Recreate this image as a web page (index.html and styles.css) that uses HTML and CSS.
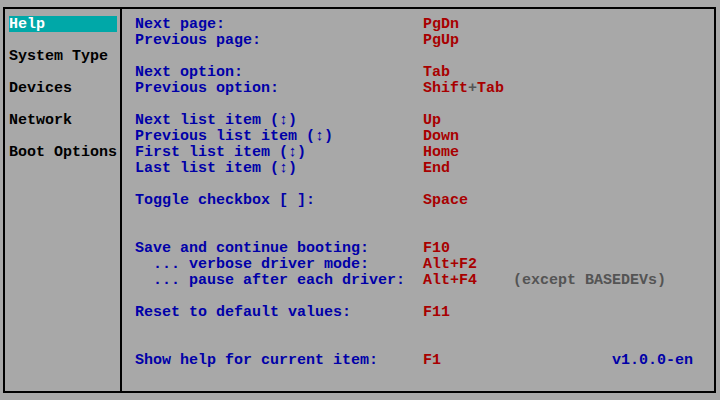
FILE: index.html
```html
<!DOCTYPE html>
<html lang="en">
<head>
  <meta charset="UTF-8">
  <title>Boot Help</title>
  <link rel="stylesheet" href="styles.css">
</head>
<body>
  <div class="screen">
    <div class="frame">
      <div class="menu">
        <div class="menu-item active">Help</div>
        <div class="menu-item">System Type</div>
        <div class="menu-item">Devices</div>
        <div class="menu-item">Network</div>
        <div class="menu-item">Boot Options</div>
      </div>

      <div class="help">
        <div class="group">
          <div class="row"><span class="label">Next page:</span><span class="key">PgDn</span></div>
          <div class="row"><span class="label">Previous page:</span><span class="key">PgUp</span></div>
        </div>

        <div class="group">
          <div class="row"><span class="label">Next option:</span><span class="key">Tab</span></div>
          <div class="row"><span class="label">Previous option:</span><span class="key">Shift<span class="plus">+</span>Tab</span></div>
        </div>

        <div class="group">
          <div class="row"><span class="label">Next list item (↕)</span><span class="key">Up</span></div>
          <div class="row"><span class="label">Previous list item (↕)</span><span class="key">Down</span></div>
          <div class="row"><span class="label">First list item (↕)</span><span class="key">Home</span></div>
          <div class="row"><span class="label">Last list item (↕)</span><span class="key">End</span></div>
        </div>

        <div class="group">
          <div class="row"><span class="label">Toggle checkbox [ ]:</span><span class="key">Space</span></div>
        </div>

        <div class="group wide">
          <div class="row"><span class="label">Save and continue booting:</span><span class="key">F10</span></div>
          <div class="row"><span class="label sub">... verbose driver mode:</span><span class="key">Alt+F2</span></div>
          <div class="row"><span class="label sub">... pause after each driver:</span><span class="key">Alt+F4</span><span class="note">(except BASEDEVs)</span></div>
        </div>

        <div class="group">
          <div class="row"><span class="label">Reset to default values:</span><span class="key">F11</span></div>
        </div>

        <div class="group wide">
          <div class="row"><span class="label">Show help for current item:</span><span class="key">F1</span><span class="version">v1.0.0-en</span></div>
        </div>
      </div>
    </div>
  </div>
</body>
</html>
```

FILE: styles.css
```css
body {
  margin: 0;
  padding: 0;
  background-color: #a8a8a8;
  font-family: 'Liberation Mono', 'DejaVu Sans Mono', monospace;
  font-weight: bold;
  font-size: 15px;
  line-height: 18px;
  color: #000;
}

.screen {
  width: 720px;
  height: 400px;
  padding: 7px 0 0 3px;
  box-sizing: border-box;
}

.frame {
  display: flex;
  width: 713px;
  height: 386px;
  border: 2px solid #000;
  box-sizing: border-box;
}

.menu {
  display: flex;
  flex-direction: column;
  gap: 16px;
  width: 117px;
  padding: 7px 0 0 4px;
  border-right: 2px solid #000;
  box-sizing: border-box;
}

.menu-item {
  width: 108px;
  height: 16px;
  white-space: pre;
}

.menu-item.active {
  background-color: #00a8a8;
  color: #fff;
}

.help {
  flex: 1;
  padding: 7px 0 0 13px;
  color: #0000a8;
}

.group + .group {
  margin-top: 16px;
}

.group.wide {
  margin-top: 32px;
}

.row {
  display: flex;
  height: 16px;
  white-space: pre;
}

.label {
  width: 288px;
}

.label.sub {
  padding-left: 18px;
  box-sizing: border-box;
}

.key {
  width: 90px;
  color: #a80000;
}

.plus {
  color: #545454;
}

.note {
  color: #545454;
}

.version {
  margin-left: 99px;
  color: #0000a8;
}
```
